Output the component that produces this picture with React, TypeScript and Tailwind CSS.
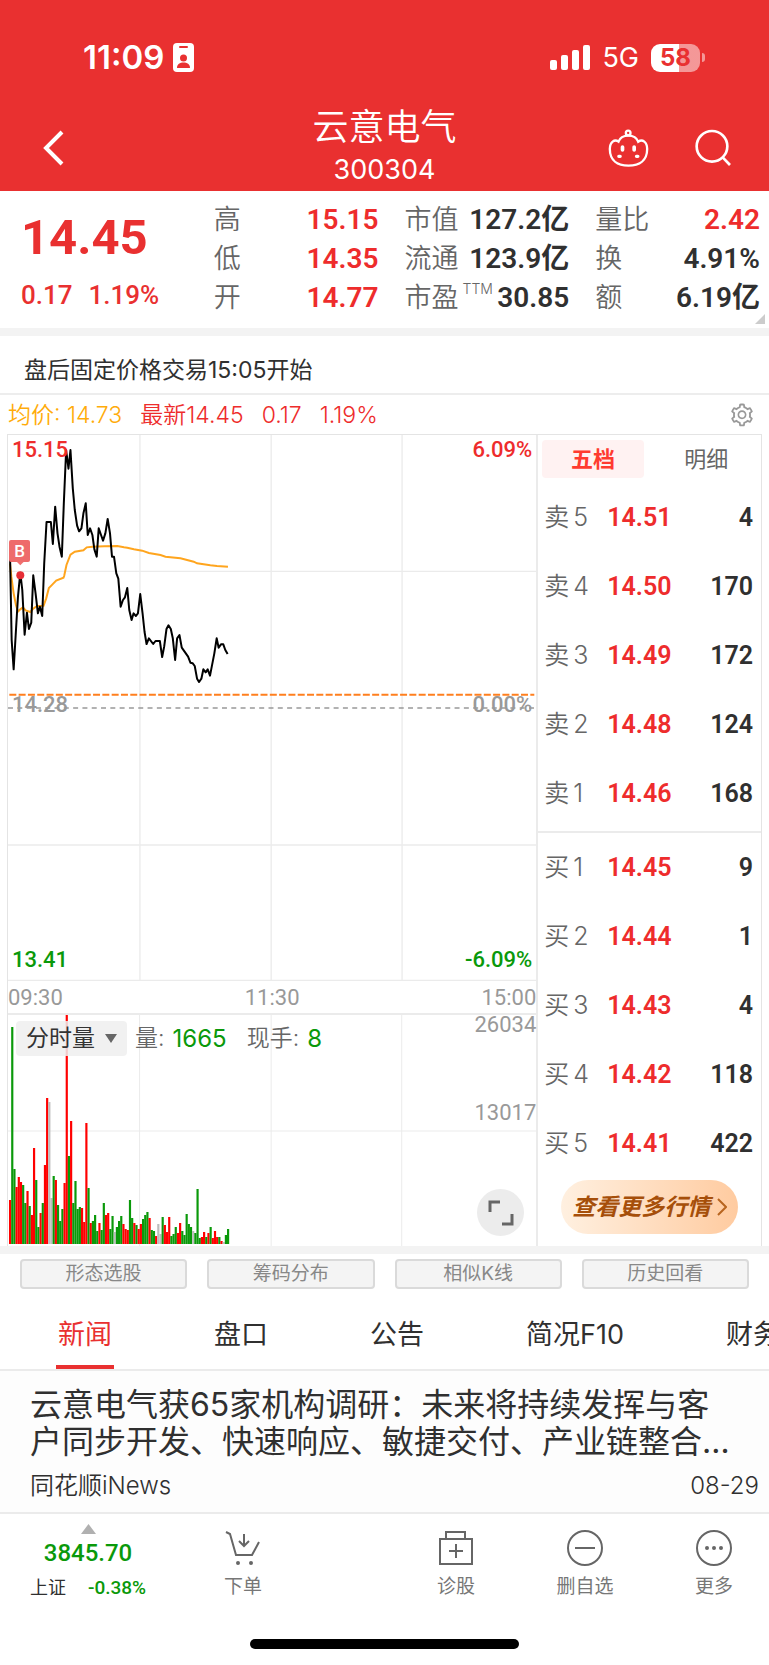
import { AiOutlineSetting } from "react-icons/ai";

const stats = [
  [
    { label: "高", value: "15.15", red: true },
    { label: "低", value: "14.35", red: true },
    { label: "开", value: "14.77", red: true },
  ],
  [
    { label: "市值", value: "127.2亿" },
    { label: "流通", value: "123.9亿" },
    { label: "市盈", sup: "TTM", value: "30.85" },
  ],
  [
    { label: "量比", value: "2.42", red: true },
    { label: "换", value: "4.91%" },
    { label: "额", value: "6.19亿" },
  ],
];

const sells = [
  ["卖5", "14.51", "4"],
  ["卖4", "14.50", "170"],
  ["卖3", "14.49", "172"],
  ["卖2", "14.48", "124"],
  ["卖1", "14.46", "168"],
];

const buys = [
  ["买1", "14.45", "9"],
  ["买2", "14.44", "1"],
  ["买3", "14.43", "4"],
  ["买4", "14.42", "118"],
  ["买5", "14.41", "422"],
];

const pricePoints =
  "27,370 32,630 38,718 45,600 51,500 58,428 64,480 71,614 78,548 84,597 91,578 97,436 104,490 111,550 117,530 124,558 130,400 137,276 150,276 156,342 163,230 170,310 176,350 183,380 189,220 196,60 203,116 209,60 216,175 222,240 229,287 235,304 242,295 248,250 255,220 261,315 268,295 275,315 281,358 288,380 294,295 301,315 307,332 314,310 321,267 328,310 334,380 340,380 347,430 353,446 360,530 367,510 373,502 380,474 386,540 393,570 399,550 406,558 412,550 419,492 426,550 432,606 438,642 445,625 458,642 465,633 478,633 485,681 491,650 498,597 504,586 511,597 517,625 524,690 530,625 537,615 544,653 563,680 570,698 577,700 583,708 590,746 596,756 603,746 609,718 616,727 622,718 629,737 642,670 649,625 655,653 662,643 669,643 675,660 682,672";

const avgPoints =
  "27,400 31,440 38,490 45,525 51,545 58,538 66,532 74,541 88,546 97,536 108,528 128,527 136,505 144,474 152,466 166,452 188,443 190,438 197,405 209,374 222,365 248,361 258,352 275,350 310,349 350,348 370,352 380,353 400,358 425,362 445,369 480,375 495,380 540,385 580,395 590,400 630,406 650,408 683,410";

// r = up, g = down, n = flat
const volumes =
  "r44 g217 g75 r57 r67 r62 g59 g41 r53 g38 r29 r96 g64 g17 r31 g41 r79 r146 n142 n46 g68 r64 g39 g23 g35 r61 r230 g88 r123 g41 g63 g35 g37 r36 r22 r121 g56 r21 g23 g29 g13 r21 g14 g41 r29 r31 g15 g28 n12 g17 g23 g28 r20 r15 r14 g44 g26 r21 g19 r15 r20 g25 g29 g32 r26 g14 g13 r8 n20 n10 g27 r19 r12 r27 g8 g10 g17 r11 r21 g13 g9 g30 g20 g17 n13 g11 g55 g6 r7 r12 g7 r11 g17 r6 r13 r7 g7 r3 n2 g9 g15".split(
    " "
  );

const volumeColors: Record<string, string> = {
  r: "#ff0000",
  g: "#0a990a",
  n: "#bdbdbd",
};

const tools = ["形态选股", "筹码分布", "相似K线", "历史回看"];
const tabs = ["新闻", "盘口", "公告", "简况F10", "财务"];

const StatusBar = () => {
  return (
    <div className="flex h-[108px] items-center justify-between pt-[7px] pr-[64px] pl-[83px]">
      <div className="flex items-center gap-[9px]">
        <span className="text-[33px] leading-[33px] font-semibold">11:09</span>
        <svg width="21" height="29" viewBox="0 0 21 29">
          <rect width="21" height="29" rx="4" fill="#fff" />
          <rect x="6" y="3" width="9" height="2" rx="1" fill="#e93030" />
          <circle cx="10.500" cy="15" r="3.500" fill="#e93030" />
          <path d="M4 25c0-4 3-5.500 6.500-5.500S17 21 17 25z" fill="#e93030" />
        </svg>
      </div>
      <div className="flex items-center">
        <svg width="40" height="25" viewBox="0 0 40 25" fill="#fff">
          <rect x="0" y="15" width="7" height="10" rx="2" />
          <rect x="11" y="10" width="7" height="15" rx="2" />
          <rect x="22" y="5" width="7" height="20" rx="2" />
          <rect x="33" y="0" width="7" height="25" rx="2" />
        </svg>
        <span className="ml-3 text-[27px] leading-[32px]">5G</span>
        <div className="ml-3 flex h-[28px] w-[49px] items-center justify-center rounded-[9px] bg-linear-to-r from-white from-58% to-white/50 to-58% text-[24px] leading-[28px] font-bold text-[#e93030]">
          58
        </div>
        <div className="ml-[2px] h-[9px] w-[3px] rounded-r-full bg-white/50" />
      </div>
    </div>
  );
};

const Header = () => {
  return (
    <header className="bg-[#e93030] text-white">
      <StatusBar />
      <div className="grid h-[83px] grid-cols-[1fr_auto_1fr] pb-1">
        <button aria-label="返回" className="flex w-16 items-center justify-end">
          <svg width="22" height="36" viewBox="0 0 22 36" fill="none" stroke="#fff" strokeWidth="4">
            <path d="M20 2 4 18l16 16" />
          </svg>
        </button>
        <div className="text-center">
          <h1 className="text-[36px] leading-[38px] font-[350]">云意电气</h1>
          <p className="mt-2 text-[27px] leading-[32px]">300304</p>
        </div>
        <div className="flex items-center justify-end gap-[45px] pr-[38px]">
          <button aria-label="助手">
            <svg width="43" height="40" viewBox="24 38 128 120" fill="none" stroke="#fff" strokeWidth="7">
              <circle cx="87" cy="53" r="7" />
              <path d="M58 79C46 70 32 80 32 101c0 34 23 50 56 50s56-16 56-50c0-21-14-31-27-22C108 55 67 55 58 79z" />
              <path d="M70 95v9M105 95v9" strokeWidth="11" strokeLinecap="round" />
              <path d="M59 123h4M112 123h4" strokeWidth="10" strokeLinecap="round" />
            </svg>
          </button>
          <button aria-label="搜索">
            <svg width="36" height="37" viewBox="284 40 108 111" fill="none" stroke="#fff" strokeWidth="8">
              <circle cx="335" cy="92" r="46" />
              <path d="m367 125 22 23" />
            </svg>
          </button>
        </div>
      </div>
    </header>
  );
};

const Quote = () => {
  return (
    <section className="relative grid h-[137px] grid-cols-[187fr_164fr_164fr_164fr] gap-x-[26px] pt-[9px] pr-[9px]">
      <div className="pt-[10px] pl-[21px] font-[Roboto] text-[#e93030]">
        <div className="text-[49px] leading-[56px] font-bold">14.45</div>
        <div className="mt-[14px] flex gap-4 text-[26px] leading-[30px] font-medium">
          <span>0.17</span>
          <span>1.19%</span>
        </div>
      </div>
      {stats.map((column, i) => (
        <dl key={i}>
          {column.map((item) => (
            <div key={item.label} className="flex h-[39px] items-center justify-between">
              <dt className="flex text-[27px] leading-[39px] font-[350] text-[#666]">
                {item.label}
                {item.sup && <sup className="top-0 ml-[4px] text-[14px] leading-[22px]">{item.sup}</sup>}
              </dt>
              <dd
                className={`font-[Roboto,'Noto_Sans_CJK_SC',sans-serif] text-[28px] leading-[39px] font-semibold whitespace-nowrap ${
                  item.red ? "text-[#ee2c2c]" : "text-[#303030]"
                }`}
              >
                {item.value}
              </dd>
            </div>
          ))}
        </dl>
      ))}
      <svg className="absolute right-1 bottom-1" width="10" height="10" viewBox="0 0 10 10">
        <path d="M10 0v10H0z" fill="#ccc" />
      </svg>
    </section>
  );
};

const PriceChart = () => {
  return (
    <div className="relative h-[546px] font-[Roboto] text-[22px] leading-[26px] font-medium">
      <svg className="h-full w-full" viewBox="21 15 1590 1638" preserveAspectRatio="none" fill="none">
        <g stroke="#ebebeb" strokeWidth="4">
          <path d="M418 15v1638M813 15v1638M1207 15v1638" />
          <path d="M21 424h1590M21 1245h1590M21 1651h1590" />
        </g>
        <path d="M21 834h1590" stroke="#999" strokeWidth="4" strokeDasharray="15 13" />
        <path d="M25 794h1580" stroke="#ff7f1e" strokeWidth="6" strokeDasharray="21 7" />
        <polyline points={avgPoints} stroke="#ffa51e" strokeWidth="6" />
        <polyline points={pricePoints} stroke="#000" strokeWidth="6" strokeLinejoin="round" />
        <circle cx="58" cy="436" r="12" fill="#e62e36" />
        <path d="M48 396h20l-10 10z" fill="#f07070" />
      </svg>
      <span className="absolute top-[105px] left-[1px] flex h-[22px] w-[21px] items-center justify-center rounded-[2px] bg-[#ee6b6b] text-[17px] text-white">
        B
      </span>
      <div className="absolute inset-x-1 top-[2px] flex justify-between text-[#ee2c2c]">
        <span>15.15</span>
        <span>6.09%</span>
      </div>
      <div className="absolute inset-x-1 top-[257px] flex justify-between text-[#999]">
        <span>14.28</span>
        <span>0.00%</span>
      </div>
      <div className="absolute inset-x-1 bottom-[8px] flex justify-between text-[#0a990a]">
        <span>13.41</span>
        <span>-6.09%</span>
      </div>
    </div>
  );
};

const VolumeChart = () => {
  return (
    <div className="relative h-[233px] border-t-2 border-[#ebebeb]">
      <svg className="h-full w-full" viewBox="0 0 530 231" preserveAspectRatio="none">
        <path d="M132 0v231M264 0v231M395 0v231M0 116h530" stroke="#ebebeb" />
        {volumes.map((item, i) => {
          const height = Number(item.slice(1));
          return (
            <rect
              key={i}
              x={1 + i * 2.187}
              y={229 - height}
              width="2.187"
              height={height}
              fill={volumeColors[item[0]]}
            />
          );
        })}
      </svg>
      <div className="absolute top-[6px] left-2 flex items-center text-[23px] leading-[35px]">
        <button className="flex h-[35px] items-center gap-[10px] rounded-[4px] bg-[#efefef]/85 px-[10px] text-[#333]">
          分时量
          <svg width="12" height="9" viewBox="0 0 12 9">
            <path d="M0 0h12L6 9z" fill="#666" />
          </svg>
        </button>
        <span className="ml-2 font-[350] text-[#666]">量:</span>
        <span className="ml-2 text-[24px] text-[#0a990a]">1665</span>
        <span className="ml-5 font-[350] text-[#666]">现手:</span>
        <span className="ml-2 text-[24px] text-[#0a990a]">8</span>
      </div>
      <div className="absolute -top-[2px] right-0 font-[Roboto] text-[22px] leading-[23px] text-[#999]">26034</div>
      <div className="absolute top-[86px] right-0 font-[Roboto] text-[22px] leading-[23px] text-[#999]">13017</div>
      <button
        aria-label="全屏"
        className="absolute right-3 bottom-[10px] flex h-[47px] w-[47px] items-center justify-center rounded-full bg-[#ececec]"
      >
        <svg width="26" height="26" viewBox="0 0 26 26" fill="none" stroke="#666" strokeWidth="3">
          <path d="M2 12V2h10M24 14v10H14" />
        </svg>
      </button>
    </div>
  );
};

const BookRows = ({ rows }: { rows: string[][] }) => {
  return (
    <>
      {rows.map(([level, price, amount]) => (
        <tr key={level} className="h-[69px]">
          <th scope="row" className="w-[63px] text-left text-[25px] font-[350] text-[#666]">
            <span className="flex gap-1">
              <span>{level[0]}</span>
              <span>{level[1]}</span>
            </span>
          </th>
          <td className="font-[Roboto] text-[25px] font-semibold text-[#ee2c2c]">{price}</td>
          <td className="text-right font-[Roboto] text-[25px] font-semibold text-[#303030]">{amount}</td>
        </tr>
      ))}
    </>
  );
};

const OrderBook = () => {
  return (
    <aside className="flex flex-col border-l-2 border-[#ebebeb]">
      <div className="grid h-12 grid-cols-2 gap-3 px-1 py-[5px] text-[22px]">
        <button className="rounded-[4px] bg-[#fff2f2] font-bold text-[#ff3b30]">五档</button>
        <button className="text-[#666]">明细</button>
      </div>
      <table className="ml-[6px] mr-2 border-collapse">
        <tbody>
          <BookRows rows={sells} />
        </tbody>
      </table>
      <div className="mt-[3px] border-t-2 border-[#ebebeb]" />
      <table className="ml-[6px] mr-2 border-collapse">
        <tbody>
          <BookRows rows={buys} />
        </tbody>
      </table>
      <button className="mx-[23px] mt-[2px] flex h-[54px] items-center justify-center gap-[7px] rounded-full bg-linear-to-r from-[#fff0e0] to-[#ffcba0] text-[23px] font-bold text-[#a64f0a] italic">
        查看更多行情
        <svg width="10" height="18" viewBox="0 0 10 18" fill="none" stroke="#b8651f" strokeWidth="2">
          <path d="m1 1 8 8-8 8" />
        </svg>
      </button>
    </aside>
  );
};

const News = () => {
  return (
    <section>
      <nav className="flex h-[76px] gap-[102px] overflow-hidden border-b-2 border-[#ebebeb] pl-[58px] text-[27px] whitespace-nowrap text-[#303030]">
        {tabs.map((tab, i) => (
          <a
            key={tab}
            href="#"
            className={i === 0 ? "relative leading-[80px] text-[#e93030]" : "leading-[80px]"}
          >
            {tab}
            {i === 0 && <span className="absolute inset-x-[-2px] top-[70px] h-1 bg-[#e93030]" />}
          </a>
        ))}
      </nav>
      <article className="border-b-2 border-[#ebebeb] bg-[#fdfdfd] pt-[15px] pb-3 text-[#303030]">
        <h2 className="px-[30px] text-[32px] leading-[37px]">
          云意电气获65家机构调研：未来将持续发挥与客户同步开发、快速响应、敏捷交付、产业链整合…
        </h2>
        <div className="mt-3 flex justify-between pr-[10px] pl-[30px] text-[24px] leading-[28px] font-[350]">
          <span>同花顺iNews</span>
          <time>08-29</time>
        </div>
      </article>
    </section>
  );
};

const Footer = () => {
  return (
    <footer className="flex h-[100px] justify-between">
      <div className="flex">
        <a href="#" className="flex w-[176px] flex-col items-center pt-[10px] text-[#0a990a]">
          <svg width="15" height="10" viewBox="0 0 15 10">
            <path d="M7.500 0 15 10H0z" fill="#b0b0b0" />
          </svg>
          <span className="mt-[5px] font-[Roboto] text-[24px] leading-[28px] font-medium">3845.70</span>
          <span className="mt-[8px] flex gap-[22px] text-[18px] leading-[26px]">
            <span className="text-[#303030]">上证</span>
            <span className="font-[Roboto] text-[19px] font-medium">-0.38%</span>
          </span>
        </a>
        <a href="#" className="flex w-[134px] flex-col items-center pt-4 text-[19px] leading-[26px] text-[#777]">
          <svg width="36" height="36" viewBox="0 0 36 36" fill="none" stroke="#666" strokeWidth="2">
            <path d="m1 2 4 2 6 21h16l7-13M19 4v12M14 11l5 5 5-5" />
            <circle cx="13" cy="33" r="1" />
            <circle cx="26" cy="33" r="1" />
          </svg>
          <span className="mt-2">下单</span>
        </a>
      </div>
      <div className="flex gap-[19px]">
        <a href="#" className="flex w-[110px] flex-col items-center pt-4 text-[19px] leading-[26px] text-[#777]">
          <svg width="36" height="36" viewBox="0 0 36 36" fill="none" stroke="#666" strokeWidth="2">
            <path d="M2 9h32v25H2zM8 9V2h19v7M11 21h14M18 14v14" />
          </svg>
          <span className="mt-2">诊股</span>
        </a>
        <a href="#" className="flex w-[110px] flex-col items-center pt-4 text-[19px] leading-[26px] text-[#777]">
          <svg width="36" height="36" viewBox="0 0 36 36" fill="none" stroke="#666" strokeWidth="2">
            <circle cx="18" cy="18" r="17" />
            <path d="M8 18h20" />
          </svg>
          <span className="mt-2">删自选</span>
        </a>
        <a href="#" className="flex w-[110px] flex-col items-center pt-4 text-[19px] leading-[26px] text-[#777]">
          <svg width="36" height="36" viewBox="0 0 36 36" fill="none" stroke="#666" strokeWidth="2">
            <circle cx="18" cy="18" r="17" />
            <path d="M11 18h0M18 18h0M25 18h0" strokeWidth="4" strokeLinecap="round" />
          </svg>
          <span className="mt-2">更多</span>
        </a>
      </div>
    </footer>
  );
};

const App = () => {
  return (
    <div className="overflow-x-hidden bg-white font-[Inter,'Noto_Sans_CJK_SC',sans-serif]">
      <Header />
      <Quote />
      <div className="h-2 bg-[#f3f3f3]" />
      <p className="h-[59px] border-b-2 border-[#ededed] pl-6 text-[23px] leading-[68px] text-[#303030]">
        盘后固定价格交易15:05开始
      </p>
      <div className="flex h-[39px] items-center gap-[18px] pr-[14px] pl-2 text-[23px] leading-[42px] font-[350] text-[#ee2c2c]">
        <span className="text-[#ffac0a]">均价: 14.73</span>
        <span>最新14.45</span>
        <span>0.17</span>
        <span>1.19%</span>
        <AiOutlineSetting className="ml-auto h-[26px] w-[26px] text-[#999]" />
      </div>
      <div className="mx-[7px] grid grid-cols-[529fr_225fr] border border-b-0 border-[#e4e4e4]">
        <div>
          <PriceChart />
          <div className="flex h-8 justify-between font-[Roboto] text-[22px] leading-[34px] text-[#999]">
            <span>09:30</span>
            <span>11:30</span>
            <span>15:00</span>
          </div>
          <VolumeChart />
        </div>
        <OrderBook />
      </div>
      <div className="h-2 bg-[#f3f3f3]" />
      <div className="grid grid-cols-4 gap-5 px-5 pt-[5px] pb-[6px]">
        {tools.map((tool) => (
          <button
            key={tool}
            className="h-[30px] rounded-[4px] border-2 border-[#dadada] bg-[#f4f4f4] text-[19px] leading-[26px] text-[#888]"
          >
            {tool}
          </button>
        ))}
      </div>
      <News />
      <Footer />
      <div className="flex justify-center pt-[25px] pb-4">
        <div className="h-[10px] w-[35%] rounded-full bg-black" />
      </div>
    </div>
  );
};

export default App;
